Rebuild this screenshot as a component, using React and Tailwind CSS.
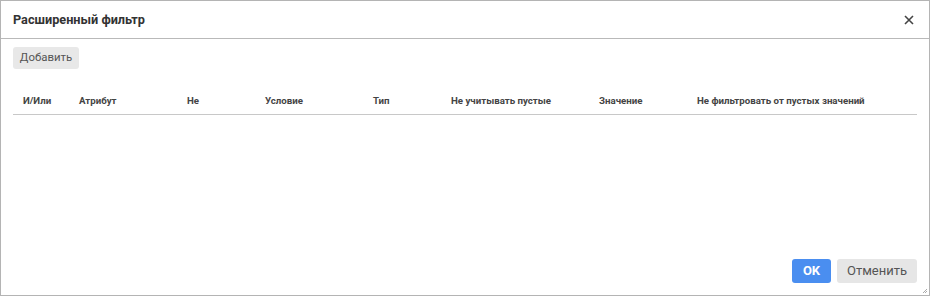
import React from "react";

const cols = [
  { label: "И/Или", w: "w-[56px]" },
  { label: "Атрибут", w: "w-[108px]" },
  { label: "Не", w: "w-[78px]" },
  { label: "Условие", w: "w-[108px]" },
  { label: "Тип", w: "w-[78px]" },
  { label: "Не учитывать пустые", w: "w-[148px]" },
  { label: "Значение", w: "w-[98px]" },
  { label: "Не фильтровать от пустых значений", w: "flex-1" },
];

export default function App() {
  return (
    <div
      className="w-[930px] h-[296px] bg-white border border-[#b4b4b4] flex flex-col relative"
      style={{ fontFamily: "Roboto, 'Liberation Sans', sans-serif" }}
    >
      <div className="h-[38px] shrink-0 border-b border-[#b9b9b9] flex items-center justify-between pl-[12px] pr-[14px]">
        <span className="text-[12.7px] font-bold text-[#333333]">Расширенный фильтр</span>
        <svg width="10" height="10" viewBox="0 0 10 10" className="mr-[1px]">
          <path d="M1 1L9 9M9 1L1 9" stroke="#444" strokeWidth="1.6" />
        </svg>
      </div>
      <div className="px-[12px] pt-[8px] flex-1 flex flex-col">
        <div className="flex">
          <button className="h-[22px] w-[66px] rounded-[3px] bg-[#e8e8e8] text-[11.4px] text-[#555555] leading-none">
            Добавить
          </button>
        </div>
        <div className="mt-[19px] flex h-[27px] items-center border-b border-[#c8c8c8]">
          {cols.map((c) => (
            <div key={c.label} className={`${c.w} pl-[10px] text-[9.7px] font-bold text-[#444444] whitespace-nowrap`}>
              {c.label}
            </div>
          ))}
        </div>
      </div>
      <div className="flex justify-end gap-[6px] pr-[12px] pb-[12px]">
        <button className="h-[24px] w-[39px] rounded-[3px] bg-[#4a8ef0] text-white text-[13px] font-bold">
          OK
        </button>
        <button className="h-[24px] w-[80px] rounded-[3px] bg-[#e6e6e6] text-[#555555] text-[13px]">
          Отменить
        </button>
      </div>
      <svg width="6" height="6" viewBox="0 0 6 6" className="absolute right-[1px] bottom-[1px]">
        <path d="M5 1L1 5M5 3L3 5" stroke="#aaa" strokeWidth="1" />
      </svg>
    </div>
  );
}
